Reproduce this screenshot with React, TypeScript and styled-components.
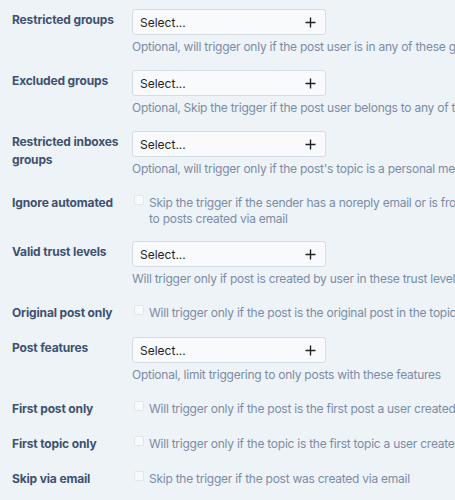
import styled, { createGlobalStyle } from "styled-components";

const GlobalStyle = createGlobalStyle`
  body {
    margin: 0;
    background: #eef3f7;
    font-family: Inter, "Noto Sans", sans-serif;
    overflow: hidden;
  }
`;

const Form = styled.div`
  width: 900px;
  padding: 9px 0 0 12px;
`;

const Row = styled.div<{ $checkbox?: boolean }>`
  display: grid;
  grid-template-columns: 120px 1fr;
  margin-bottom: ${(p) => (p.$checkbox ? "14px" : "15px")};
  padding-top: ${(p) => (p.$checkbox ? "3px" : "0")};
`;

const Label = styled.div<{ $checkbox?: boolean }>`
  font-size: 12px;
  font-weight: 700;
  letter-spacing: -0.15px;
  line-height: ${(p) => (p.$checkbox ? "16px" : "18px")};
  min-height: 18px;
  color: #3d5171;
  padding-top: ${(p) => (p.$checkbox ? "0" : "2px")};
  padding-right: 2px;
`;

const Select = styled.div`
  width: 194px;
  height: 26px;
  box-sizing: border-box;
  display: flex;
  align-items: center;
  justify-content: space-between;
  padding: 0 9px 0 7px;
  background: #f8fafc;
  border: 1px solid #d5dce4;
  border-radius: 3px;
  font-size: 12px;
  color: #1f2328;
`;

const Help = styled.div`
  margin-top: 4px;
  font-size: 12px;
  letter-spacing: -0.25px;
  line-height: 16px;
  color: #7b8ca6;
  white-space: nowrap;
`;

const CheckLine = styled.label`
  display: flex;
  align-items: flex-start;
  gap: 5px;
  font-size: 12px;
  letter-spacing: -0.25px;
  line-height: 16px;
  color: #7b8ca6;
  white-space: nowrap;
`;

const Box = styled.span`
  flex: none;
  width: 8px;
  height: 8px;
  margin: 0 0 0 2px;
  border: 1px solid #e1e6ec;
  border-radius: 2px;
  background: #f7f9fb;
`;

function Plus() {
  return (
    <svg width="11" height="11" viewBox="0 0 11 11">
      <path d="M5.5 0.5v10M0.5 5.5h10" stroke="#1f2328" strokeWidth="1.4" />
    </svg>
  );
}

const selectRows = [
  { label: "Restricted groups", help: "Optional, will trigger only if the post user is in any of these groups" },
  { label: "Excluded groups", help: "Optional, Skip the trigger if the post user belongs to any of these groups" },
  { label: "Restricted inboxes groups", help: "Optional, will trigger only if the post's topic is a personal message" },
];

function SelectRow({ label, help }: { label: string; help: string }) {
  return (
    <Row>
      <Label>{label}</Label>
      <div>
        <Select>
          <span>Select...</span>
          <Plus />
        </Select>
        <Help>{help}</Help>
      </div>
    </Row>
  );
}

function CheckRow({ label, children }: { label: string; children: React.ReactNode }) {
  return (
    <Row $checkbox>
      <Label $checkbox>{label}</Label>
      <CheckLine>
        <Box />
        <span>{children}</span>
      </CheckLine>
    </Row>
  );
}

export default function App() {
  return (
    <>
      <GlobalStyle />
      <Form>
        {selectRows.map((r) => (
          <SelectRow key={r.label} label={r.label} help={r.help} />
        ))}
        <CheckRow label="Ignore automated">
          Skip the trigger if the sender has a noreply email or is from an automated source. Only applies
          <br />
          to posts created via email
        </CheckRow>
        <SelectRow label="Valid trust levels" help="Will trigger only if post is created by user in these trust levels" />
        <CheckRow label="Original post only">
          Will trigger only if the post is the original post in the topic
        </CheckRow>
        <SelectRow label="Post features" help="Optional, limit triggering to only posts with these features" />
        <CheckRow label="First post only">
          Will trigger only if the post is the first post a user created
        </CheckRow>
        <CheckRow label="First topic only">
          Will trigger only if the topic is the first topic a user created
        </CheckRow>
        <CheckRow label="Skip via email">Skip the trigger if the post was created via email</CheckRow>
      </Form>
    </>
  );
}
